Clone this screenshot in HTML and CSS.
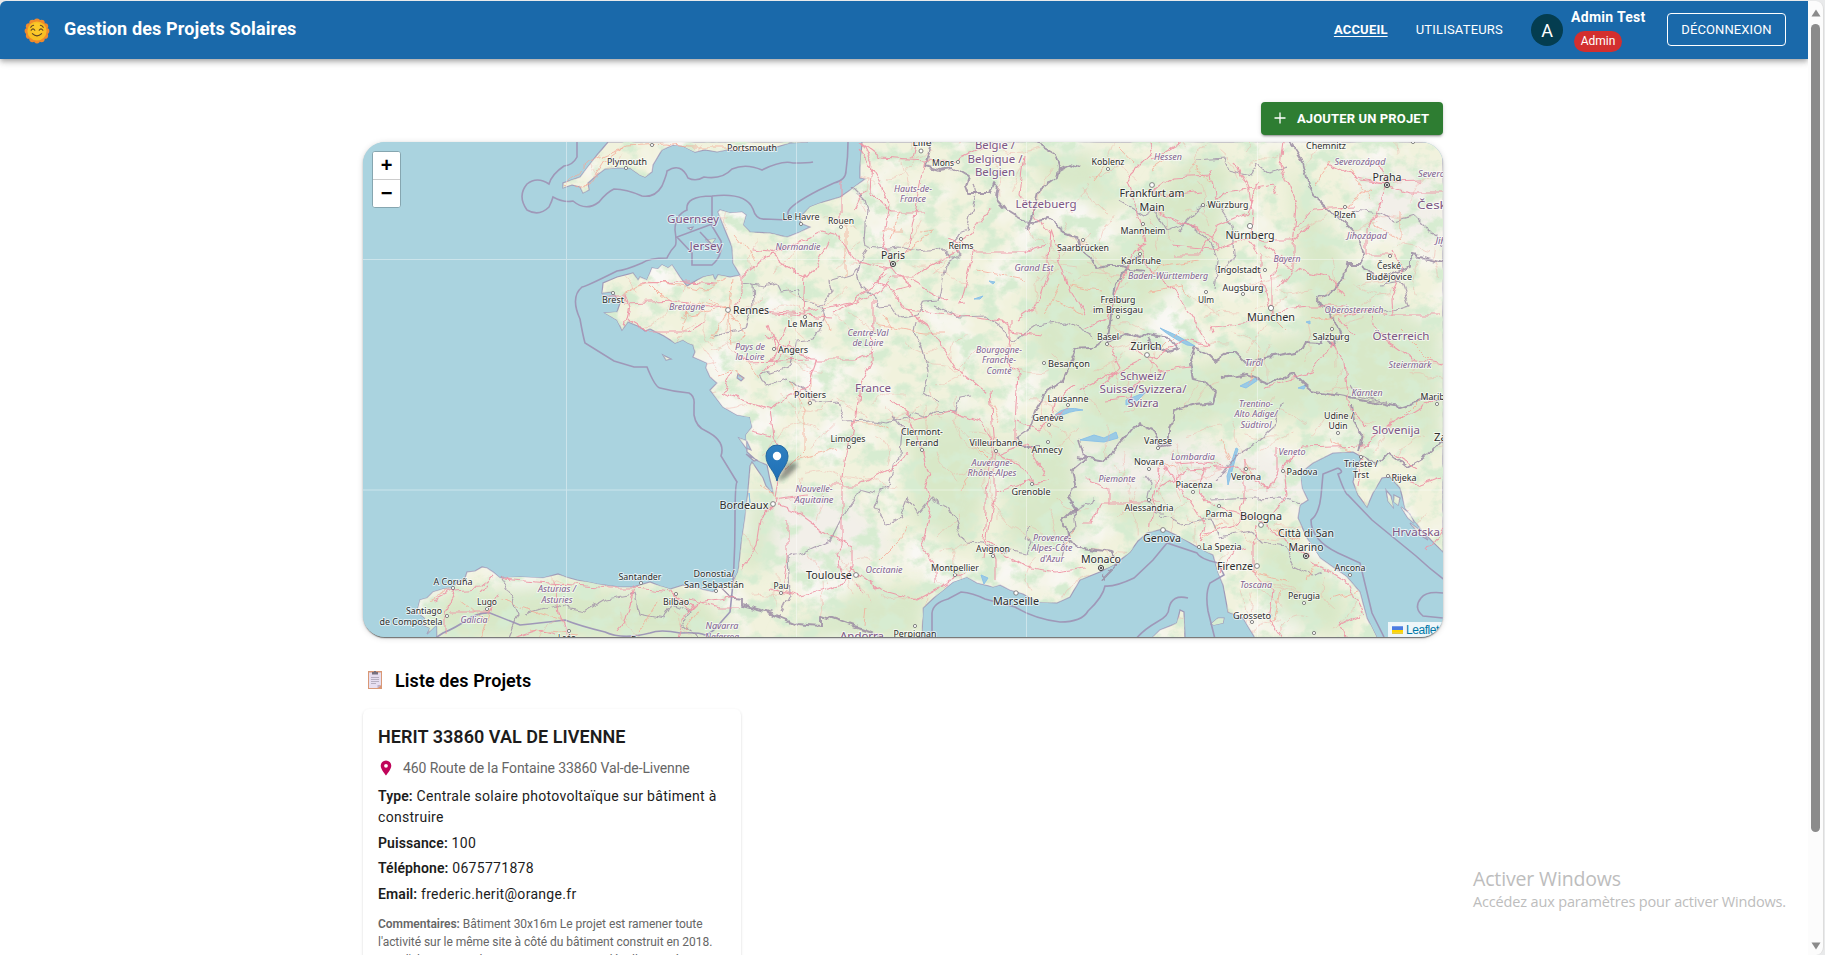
FILE: index.html
```html
<!DOCTYPE html>
<html lang="fr">
<head>
<meta charset="utf-8">
<title>Gestion des Projets Solaires</title>
<link rel="stylesheet" href="styles.css">
</head>
<body>
<div class="window">
  <div class="page">
    <header class="appbar">
      <svg class="sun" viewBox="0 0 26 26">
        <g id="rays"></g>
        <circle cx="13" cy="13" r="9.6" fill="#f8bf23"/>
        <circle cx="13" cy="11" r="6" fill="#ffd02e" opacity=".6"/>
        <path d="M7.2 12.2q1.8-2.6 3.6 0M15.2 12.2q1.8-2.6 3.6 0M8.4 15.6q4.6 4.6 9.2 0M6.8 9.3q1-1.6 2.8-2M16.4 7.3q1.8.4 2.8 2" fill="none" stroke="#5b4224" stroke-width="1.1" stroke-linecap="round"/>
      </svg>
      <h1 class="brand">Gestion des Projets Solaires</h1>
      <nav class="nav">
        <a class="nav-link active">ACCUEIL</a>
        <a class="nav-link">UTILISATEURS</a>
      </nav>
      <div class="user">
        <span class="avatar">A</span>
        <div class="identity">
          <span class="user-name">Admin Test</span>
          <span class="chip">Admin</span>
        </div>
      </div>
      <button class="logout">DÉCONNEXION</button>
    </header>
    <main class="content">
      <div class="actions">
        <button class="add"><svg viewBox="0 0 12 12"><path d="M6 .5v11M.5 6h11" stroke="#fff" stroke-width="1.3"/></svg><span>AJOUTER UN PROJET</span></button>
      </div>
      <section class="map">
        <svg class="tiles" viewBox="363 142 1080 496">
          <defs>
            <filter id="woods" x="0" y="0" width="100%" height="100%">
              <feTurbulence type="fractalNoise" baseFrequency=".05 .06" numOctaves="6" seed="8"/>
              <feColorMatrix values="0 0 0 0 .68  0 0 0 0 .84  0 0 0 0 .64  4.5 0 0 0 -2.1"/>
            </filter>
            <filter id="fields" x="0" y="0" width="100%" height="100%">
              <feTurbulence type="fractalNoise" baseFrequency=".02" numOctaves="4" seed="21"/>
              <feColorMatrix values="0 0 0 0 .95  0 0 0 0 .935  0 0 0 0 .905  0 3 0 0 -1.35"/>
            </filter>
            <filter id="wiggle" filterUnits="userSpaceOnUse" x="363" y="142" width="1080" height="496">
              <feTurbulence type="fractalNoise" baseFrequency=".07" numOctaves="3" seed="4"/>
              <feDisplacementMap in="SourceGraphic" scale="9" xChannelSelector="R" yChannelSelector="G"/>
            </filter>
            <filter id="soft" x="-20%" y="-20%" width="140%" height="140%"><feGaussianBlur stdDeviation="9"/></filter>
            <path id="coast" d="M862 142L861 155 860 167 860 178 865 179 853 188 840 197 823 202 810 207 802 215 800 223 810 227 800 232 787 237 770 233 750 232 743 225 746 215 742 212 730 213 720 210 718 212 725 230 732 247 733 263 740 275 730 277 718 275 715 280 713 275 703 277 697 280 687 286 680 277 672 265 668 268 662 265 658 269 652 268 650 273 647 280 640 277 638 280 633 273 617 277 603 283 602 293 613 292 620 303 617 312 605 313 617 320 622 330 628 322 640 327 645 331 650 329 658 333 664 336 675 343 683 340 688 343 693 345 695 352 693 357 700 360 707 363 706 368 710 377 717 383 710 390 723 407 737 415 750 417 752 427 746 435 747 452 756 460 767 465 770 480 774 495 766 486 763 478 752 462 750 466 748 490 745 518 741 545 738 572 733 582 717 588 713 592 697 588 683 585 670 589 660 586 650 582 633 587 620 587 597 584 577 580 566 577 558 574 543 578 520 577 500 578 493 572 487 568 482 567 475 571 467 572 465 578 457 583 453 588 443 589 433 592 427 598 420 600 417 612 425 618 423 625 430 628 427 634 437 624 437 638H922L923 608 937 595 953 582 967 577 977 583 993 587 1000 585 1010 590 1023 594 1037 602 1057 603 1070 597 1080 580 1100 572 1117 563 1130 552 1138 541 1147 533 1163 529 1180 537 1197 547 1213 555 1218 572 1223 585 1228 612 1243 618 1255 638H1377L1367 618 1360 592 1347 577 1320 558 1307 538 1298 518 1300 505 1308 500 1302 488 1300 473 1313 463 1333 453 1353 452 1362 457 1357 465 1353 482 1358 495 1367 507 1373 493 1382 478 1390 477 1400 488 1405 508 1423 532 1443 552V142Z
              M608 142L597 155 587 168 580 177 563 183 563 188 572 185 580 187 583 193 589 190 588 183 597 175 605 169 617 168 630 168 640 175 645 177 652 172 653 165 662 150 673 145 683 146 695 152 705 150 717 152 727 150 740 151 777 147 790 143 808 142Z
              M1152 638L1160 630 1177 623 1180 610 1184 612 1185 638ZM1211 624L1218 618 1224 618 1223 623 1214 625ZM738 374l6 4-3 3-4-3zM706 240l9-1-4 6zM688 228l5-1-2 3zM663 355l8 4-5 1zM739 438l8 3 4 9-5-2zM746 454l11 6-3 1zM1386 490l5 6 2 11-5-6zM1394 495l6 3-2 7-4-3zM1401 507l9 7 4 9-6-5zM1410 523l11 8 7 9-8-5z"/>
            <clipPath id="land"><use href="#coast"/></clipPath>
          </defs>
          <rect x="363" y="142" width="1080" height="496" fill="#aad3df"/>
          <use href="#coast" fill="#f1f2dd" stroke="#9f9ab8" stroke-width="1.2"/>
          <g clip-path="url(#land)">
            <rect x="363" y="142" width="1080" height="496" filter="url(#fields)"/>
            <g filter="url(#soft)">
              <path fill="#f2efe9" d="M1080 440q90-10 160 10l75 10-15 50-80-20-80 10-70-20zM740 500l100-10 60 60-110 30zM1350 170l93 0 0 80-60-20z"/>
              <g fill="#d3e6c3" opacity=".85">
                <path d="M755 478q25 20 12 90l-27 5zM910 420q60-30 90 30l-30 100-60-30zM1010 440l60-20 15 120-80 10zM860 590l70-5-10 53-140 0zM1165 180l30-30 40 20-20 90-60 40-40 50-10-80zM1290 160l50 90 40 50 63 30v120l-120-30-150-10-50-20 120-40 60-20zM1250 540l40 0 60 60-10 38-60-20zM1030 150l60 0 40 60-80-20zM430 595l120-10 150 10 40 45H440zM1100 500l60-5 30 20-60 20zM1030 250l80 0 20 80-60 60-40-40zM1080 360l100 0 50 60-100 30-50-10z"/>
              </g>
            </g>
            <rect x="363" y="142" width="1080" height="496" filter="url(#woods)"/>
          </g>
          <path fill="#9acbe5" stroke="#8cc2e8" stroke-width="1" d="M1160 328q18 7 35 18l-8-1q-18-9-27-17zM1055 415q10-10 28-5-15 1-24 7zM1227 476l9-28 2 1-6 22-4 14zM1240 386l16-8 2 2-12 8zM1080 440l14-5 10 3 12-6 2 6-14 4zM1126 400l20-8-8 8-12 5zM1298 388l8-3-2 4zM989 281l6 1-2 2zM974 299l9-3-3 3zM749 493l1 10zM981 575l7 3-4 6zM1306 322l4-1v3z"/>
          <g fill="none" stroke="#9f98b8" stroke-width="1.600" id="sea-borders">
            <path d="M577 142v15q-4 8-13 9-12 8-15 18-12-8-22 0-10 12 0 26 12 7 22-3 3-6 4-10 11 6 20 4 13 11 26 1 8-10 15-13 12 0 28 7 13 2 20-10 5-12 5-15 14-9 21 7 8 4 16-1 18 3 28-8 14-6 30 1 20-10 31-7 16 0 20-1M848 142q0 15-2 29 0 9-12 12l-15 7q-29 15-31 22v8l-23-1q-9 1-12-10-7-17-41-13-27 0-25 14-12 5-12 20 2 14 0 16-5 5-8 12-18 0-25 5-16 7-25 8-32 16-35 16-12 10-2 32 3 17 5 24l29 18 20 6h13q8 20 13 21 15 4 29 5 6 3 5 12v10q2 12 12 16 20 10 15 25l16 26q-2 2-2 40 0 50-5 90l-8 9q-9 12-17 14-6-3-25-2-20-4-30 0-28 7-45-1-25-6-40-12-25 3-45 5l-30-12q-12-1-25 8-8 6-22 12-27 17-28 35v18q7 12 9 16M712 196v30l9 15q2 15-9 24h-20v-12l-15-16 35-13M700 232l16 17"/>
            <path d="M932 638V613q1-10 16-14l13-7q12 1 24 7l30 8q20 12 45 15 22 0 28-11 15-14 17-25 10 1 29-8l19-18 14-17 30 10q3 6 21 10l6 12-14 8q-5 10-2 28l9 36M1188 598q-16-4-19 10 0 8-12 14-14 8-22 18M1338 468l-15 6-2 22q-2 18-10 24 0 20 27 33l22 10 12 50 12 24M1338 468q7 4 0 6 7 20 10 21l24 25 44 36q15 14 30 25M1443 593q-17-2-22 5-8 10 2 18l20 2"/>
          </g>
          <g clip-path="url(#land)"><g class="minor" id="minor" filter="url(#wiggle)"></g></g>
          <g filter="url(#wiggle)">
          <g fill="none" stroke="#a08fa8" stroke-width="1.2" opacity=".8" stroke-linejoin="round">
            <path d="M853 188l12 12 3 10-2 30 1 7 10 1 20-2 20 4 20-2 14 10 8 0M867 250l-8 12-2 12 3 10 14 14 3 8 14-1 9 13 18-3 6-14 14-1 7-33 14-12-8-12 8-9 8-3 3-14 6-22-3-12M740 283l13 1 10 2 15-3 4 8 15-2 7 14 16 4 11-14-2-12 24-7 5-8M753 284l1 22-8 22-32 8M822 307l4 10-12 22-17 2-6 25-30 10 5 9 20-8 22 16 8 10 22-2 6 20 28-1 16 2 20-5 4-5 16 5 8-6 20 2 4-15 12-2M915 320l-2 12 9 15 6 24-4 20 15 10M935 305l23 12 28-1 16 12 10 14 24-16 30-4 26 14M892 415l10 12-2 30-6 4-6 24-8 8-6 15 12 16 14-5 8-22 10 17 10-12 4-4 18 10 8 20 8 14 16 1 10 5 36 6 4-12-10-6 8-10M874 495l-14-4-20 30-10 20-22 10-20 6 2 38-8 17M500 578l12 20 6 15-10 24M525 614l30-9 30 6 20-12 30-5 4 20 25 5 8-15 18 8-8 14 14 12M1120 202l24 14 10-6 12 20 20-7 25 18M1195 160l30-2 5 12 20 5 7-12 12 10 18-5M1210 240l8 20-4 30M1180 230l22-24 18 2 12 18 2 30-12 15M1352 210l30 3 12 8 20-6 30 30M1382 285l20-3 8 22-30 8-12-5M1060 560l4-22 12-10-2-18 20-9M1145 475l6 8-4 20 8 10 10 0M1160 516l22 8 30-5 8 18 30-6 12 12 24 4 8 20 16 8 14-4M1210 500l70-3 20 7M1215 480l10-8 12-18 20-12 18-16 8-22M1352 385l6 10 30 8"/>
          </g>
          <g fill="none" stroke="#9b8ba3" stroke-width="1.900" opacity=".85" stroke-linejoin="round">
            <path d="M933 142l-8 24 14 4 14-2 15 9-3 9 3 8 22 0 4-12 4 5-2 12 7 8 13 8 15 8 16-4 18 13 12 4 3 12 12 10 4 10 12-2 14 0 8 3 15 2M1035 142l20 12 4 14-2 10-17 12-8 28-5 11M1059 170l12-6 8 3M1140 256l-12 10-12 18-5 30-3 25-17 8-15 1-5 12-10 22-14 10-12 20-6 18-12 8 5 10 18 0M1107 342l20-8 13 5 8-6 20 4 10 12-10 3-14-5-6-10M1195 347l-6 16 3 15 14 3 10 12-3 10-18 2-20 6-6 18 0 16-9 2-6-16-16-8-20 25-14 13-28-5M1195 347l12 6 8 8 12-8 8 0 12 12 20-8 34-6 4-8 14 1 4-7 10 8 8-12-6-16-14-12-4-8 14-6 14-16 2-10 12 0 6-12-4-12-30-30-18-16-5-9-6-25-14-22 3-11 8 10 10-16 20 2 24-18 30 2M1363 267l18 12 30-13v-12l32 8M1222 378l26-4 20 8 24-8 18 16 40 7 50 10 24-8 19 0M1352 405l2 17 8 12-4 18M1362 457l14 8 12-12 18 14 24-14 13-12M1080 440l6 18-14 12 4 16-8 10 8 12-12 12 4 20 14 8 30 4 5 12-16 16M1103 572l2 8M722 588l8 8 12 2 0 8 24 6 30 12 26 2v-10l18 6 40 14"/>
          </g>
          <g fill="none" stroke="#f7a593" stroke-width=".9" opacity=".8">
            <path d="M563 185l30-25 30-12M575 187l15-2 15-25 20-14 40-2 25 3 60 0M613 300l25-15 12-3 30 3 25 5 20-10M650 285l10 10 30 20M690 300l-8 30M690 315l40-8M728 310l-28-8-20 16M728 310l-20-10M728 310l4-30M728 310l4 34M728 310l-16 28M728 310l16 22-6 14M735 235l20 25M720 375l15-5 10 8M760 380l-20-25M845 225v50M890 240l10-30M882 230l20 0M905 252l28-20M920 232l15-2M975 270l50 10M1060 285l-15 30M1055 300l28 15M892 330l-12-18M875 325l50 8 20 0M810 375v30M853 423l25 0 12 5M805 450v-40l-15-30M805 450l-20 20M795 460l40-10M780 500l-20-15M880 560l20-20 10-16M865 605l-2 20M970 440l20 20M990 400l10 20M960 490l12-20M1060 550l14-20M830 330l-6-15M1110 160l-15 20M1135 165l-15-16M1190 165l20 15M1165 160l-15 10M1135 280l30-15 35-5M1150 290l30-5 12 15M1100 290l-30-5M1180 330l-20 20M1260 350l-10 35M1275 320l10 10M1310 320l30-6 30-4M1370 220l30 20M1370 200l-20-30M1400 210v30M1340 210l30-20M1330 160l-15 25M1175 470l-14-10M1200 540l24-18M1250 570l40 10M1280 590l-8 36M1330 600l30-10M1320 560l-15 20M1300 540l-25-10M1230 460l-10-20M1255 480l-12-20M1330 440l20 10M1400 330l30 30M1420 400l-20 20M430 600l20-10M480 640l10-30M530 630l50 5M660 600l-20 30M500 600l60 20M700 610l-15 20M460 600l25 20"/>
          </g>
          <g fill="none" stroke="#ee93a5" stroke-width="1.1" opacity=".9" stroke-linejoin="round">
            <path d="M603 295l22 0 5 12-5 20M625 303l50-2 45 8M640 283l50-1 25 2M628 320l20 12 40 0 20-12M742 275v20l-10 12M742 275q30-25 50-30l30-14 15 4 18 25 37 10M760 310l45 3 45-10 37-28M762 312l70 5M832 312l50-22 10-12M806 275l-2 40M830 240l-20 38-14-4-25-22-20-2M841 180v40M855 210l10-20M862 142l10 20-2 30 20 20 35 0M893 270l-10-30 6-35-10-25-18-30M893 270l15-25 12-55 5-30M925 160l-45-3-20-15M925 160l28 2 30-14 20 0M912 158l5-28M990 210l-20 25-12 8-12-5M893 278l20 0 16-12 32-15M892 268l8 10 10 8-16 4-14-8 4-12zM893 290l12 20 25 18 30 45 25 20M905 310l35 3 60 8 12 10 30 4M910 280l36 20M960 240l15 12 50 0 20-7M973 252l-4 20-8 30 6-1M1010 320l0 15-2 28 10 10-3 50 0 20M1050 230l-3 45-10 30-22 15M1050 235l-15-20-15-20 5-40M1050 230l20 60 15 25M873 300v20l-1 40-12 25-4 30-10 40-4 30 0 60-6 10 8 25M765 335l45 25 45 0 20-8M808 360l-60 2-15-12M778 355l-10-30M771 362l15-35M760 378l18-20 12-15M733 372l-10 20M770 410l12-10 25-12 10-30M770 410l-50-18M770 410l4 25 10 20M752 430l20 5M775 505l5-30M778 505l18 6 28 20 28 15 0 20-12 20-40 10-30-8M850 568l30 22 36 10 24-13 25-15M856 584l8 10M775 505l-15 15-4 25-15 25M788 520l0 30-5 40M776 500l30-5M830 485h28l30-15 20-15M890 400l25 20 35-8 30 10 12 20-6 50 0 20-2 28 12 20v20M908 418l15 35 6 22-4 12 6 20-10 40 16 20v16M990 390l4 60 0 50-6 30-4 28M994 452l26 12 15 20 14-4M998 455l30-10 18 30M1018 420l20 10 12-10 18-12M1034 480l-40 12M988 540l18 15 20 12 30 5 30-4M1050 420l5-20 20-15M1080 390l30-15 30-14M1083 330l24-12 16-40 12-26 10-10M1145 240l-18-60 25-25-12-50M1152 190l20 6 30-4M1152 210l60 25 6 15M1152 192l20-15 40-2M1175 255l24 0 20-30 28-12 10-30M1152 160l30-18M1210 170l6 30 8-8 24-3 25-5M1273 184l5 10M1235 160l14 30 3 20-2 26 15 4 30 0 15-14M1250 240l10 14 0 20 12 40M1252 236l-40 14-40-4M1272 316l-20 6-40 4 2 8M1272 316l0-40 10-20M1265 245l24 22 40 10 16 20M1278 290l15-20 0-25 4-40-16-40 3-23M1278 310l30-4 38 0M1293 230l20-22 40-2M1360 180l27 3 36-1M1387 183l-8-24M1387 183l-30-6-30-14M1387 183l-10 30-10 16 0 25 26 0M1387 185l20 8 36 0M1393 250l10 20-13 28 1 18M1340 316l14 20M1345 316l24-6 20 5 50 0M1373 315l4 20 16 10 20 14 30 6M1332 342l-20 30-50 16M1332 342l12 22 6 44 18 18M1208 345l-26-6-25 20-28-12M1208 345l-30-50-30-30-10-20M1147 355l12 16 30-4M1108 344l12 22-18 20M1105 400l24-2 12-20M1165 460l-7 10-8 60M1158 490l30-20 48-3M1160 502l-60 0-8 20-10 0M1110 502l0-14-20-6-6-6M1165 465l20 30 20 30-4 15M1175 465l30-2 40 6 10 0M1205 467l-8 25 16 14 45 14 30 22 20 14M1244 460v40l-5 20M1256 525l-3 20 0 25 20 22-4 28 12 18M1240 470l28 20 10-20 0-22M1271 515l16-20-4-30 20-18 60-2M1205 533l30-8 10-10M1222 572l12-22 12-4M1310 560l40 24 14 30M1360 615l-20 10 4 13M1362 448l30-25 20-10 25-15M1362 458l-4 28M1390 475l30 10 20-8M1427 550l16-22M1395 455l22 14M435 600l20-10 25-2 14-12M455 590l-10 24 0 22M450 612l40 0 8-20M480 595l10-10M500 579l110 9 25 0 35 4 22 14-10 14-8 30M635 588l-10 34-8 10M555 580l3 34 10 24M513 638l25-8 18 5M670 590l18 22 10-10 40-6M690 600l30 8 18 0"/>
          </g>
          </g>
          <path d="M363 259.500h1080M363 490h1080M566.500 142v496M796.500 142v496M1026.500 142v496M1257.500 142v496" stroke="#fff" opacity=".4" stroke-width="1"/>
          <g id="labels"></g>
        </svg>
        <div class="zoom"><button>+</button><button>−</button></div>
        <svg class="pin" viewBox="0 0 46 42">
          <defs>
            <linearGradient id="pinfill" x2="0" y2="1"><stop stop-color="#2f80c0"/><stop offset="1" stop-color="#1d6fb6"/></linearGradient>
            <filter id="blur"><feGaussianBlur stdDeviation="2.200"/></filter>
          </defs>
          <path d="M13 39L22 22q8-4 12-1-4 11-21 18z" fill="#333" opacity=".5" filter="url(#blur)"/>
          <path d="M13 38C11 28 2 23 2 13a11 11 0 0 1 22 0C24 23 15 28 13 38z" fill="url(#pinfill)" stroke="#2467a0"/>
          <circle cx="13" cy="13" r="4.200" fill="#fff"/>
        </svg>
        <div class="credit"><svg viewBox="0 0 12 8"><path fill="#4c7be1" d="M0 0h12v4H0z"/><path fill="#ffd500" d="M0 4h12v3H0z"/><path fill="#e0bc00" d="M0 7h12v1H0z"/></svg>Leaflet</div>
      </section>
      <h2 class="list-title">
        <svg viewBox="0 0 14 18"><path fill="#d99876" d="M0 0h14v18H0z"/><path fill="#e7dff0" d="M1 1.500h12v12.500l-3.500 3H1z"/><path fill="#bdb0cb" d="M13 14H9.500v3z"/><path fill="#77717e" d="M4 1h6v2.600H4zM6 0h2v2H6z"/><path stroke="#a9a2b5" stroke-width=".8" d="M3 6.500h8M3 8.500h8M3 10.500h8M3 12.500h5"/></svg>
        Liste des Projets
      </h2>
      <article class="card">
        <h3>HERIT 33860 VAL DE LIVENNE</h3>
        <p class="address"><svg viewBox="0 0 12 16"><path fill="#c0055a" fill-rule="evenodd" d="M6 .5A5.300 5.300 0 0 0 .7 5.800C.7 9.500 6 15.500 6 15.500s5.300-6 5.300-9.700A5.300 5.300 0 0 0 6 .5zm0 7.200a1.900 1.900 0 1 1 0-3.800 1.900 1.900 0 0 1 0 3.800z"/></svg>460 Route de la Fontaine 33860 Val-de-Livenne</p>
        <p class="row"><b>Type:</b> Centrale solaire photovoltaïque sur bâtiment à construire</p>
        <p class="row"><b>Puissance:</b> 100</p>
        <p class="row"><b>Téléphone:</b> 0675771878</p>
        <p class="row"><b>Email:</b> frederic.herit@orange.fr</p>
        <p class="comment"><b>Commentaires:</b> Bâtiment 30x16m Le projet est ramener toute<br>l'activité sur le même site à côté du bâtiment construit en 2018.<br>Pour l'alimentation le nouveau jeune qui se détaille avec à</p>
      </article>
    </main>
  </div>
  <div class="scrollbar">
    <svg viewBox="0 0 10 8"><path d="M5 0.500L9.500 7.500H.5z" fill="#8b8b8b"/></svg>
    <div class="thumb"></div>
    <svg class="down" viewBox="0 0 10 8"><path d="M5 7.500L.5.500h9z" fill="#8b8b8b"/></svg>
  </div>
  <aside class="watermark"><p class="wm-title">Activer Windows</p><p class="wm-text">Accédez aux paramètres pour activer Windows.</p></aside>
</div>
<script src="map.js"></script>
</body>
</html>
```
FILE: styles.css
```css
* { box-sizing: border-box; margin: 0; }
body { font-family: Roboto, sans-serif; background: #e9eaeb; overflow: hidden; }
button { font: inherit; border: 0; padding: 0; }
.window { position: relative; display: flex; height: 955px; padding-top: 1px; overflow: hidden; }
.page { width: 1808px; background: #fff; border-top-left-radius: 6px; overflow: hidden; }
.appbar { display: flex; align-items: center; height: 58px; padding: 0 22px 0 24px; background: #1a69aa; color: #fff;
  box-shadow: 0 2px 4px -1px rgba(0,0,0,.2), 0 4px 5px rgba(0,0,0,.14), 0 1px 10px rgba(0,0,0,.12); }
.sun { width: 26px; height: 26px; margin: 2px 14px 0 0; }
.brand { flex: 1; font-size: 18px; font-weight: 700; line-height: 26px; padding-bottom: 3px; letter-spacing: .14px; }
.nav { display: flex; gap: 28px; font-size: 13px; letter-spacing: .2px; padding-bottom: 2px; }
.active { font-weight: 700; text-decoration: underline; text-underline-offset: 2px; }
.user { display: flex; align-items: center; margin-left: 28px; gap: 8px; }
.avatar { width: 32px; height: 32px; border-radius: 50%; background: #043d50; text-align: center; font-size: 18px; line-height: 33px; }
.identity { width: 75px; padding-top: 5px; }
.user-name { display: block; font-size: 14px; font-weight: 700; line-height: 20px; margin-bottom: 4px; letter-spacing: .3px; white-space: nowrap; }
.chip { display: block; width: 48px; height: 21px; margin: 0 0 6px 3px; border-radius: 11px; background: #d32f2f; font-size: 12px; line-height: 20px; text-align: center; }
.logout { width: 119px; height: 33px; margin: 0 0 2px 21px; border: 1px solid #fff; border-radius: 4px; background: none; color: #fff; font-size: 13px; letter-spacing: .1px; }
.content { width: 1080px; margin: 0 auto 0 363px; }
.actions { display: flex; justify-content: flex-end; padding: 43px 0 7px; }
.add { display: flex; align-items: center; width: 182px; height: 33px; padding: 0 0 1px 13px; gap: 11px; border-radius: 4px; background: #2e7d32; color: #fff; font-size: 13px; font-weight: 700; letter-spacing: .13px; white-space: nowrap;
  box-shadow: 0 3px 1px -2px rgba(0,0,0,.2), 0 2px 2px rgba(0,0,0,.14), 0 1px 5px rgba(0,0,0,.12); }
.add svg { width: 12px; height: 12px; }
.map { position: relative; height: 495px; overflow: hidden; border-radius: 22px; background: #aad3df;
  box-shadow: 0 2px 1px -1px rgba(0,0,0,.4), 0 1px 2px rgba(0,0,0,.25), 0 1px 6px rgba(0,0,0,.15); }
.tiles { display: block; width: 1080px; height: 496px; font-family: "Noto Sans", sans-serif; }
.tiles text { text-anchor: middle; fill: #2e2e2e; stroke: rgba(255,255,255,.65); stroke-width: 2px; paint-order: stroke; stroke-linejoin: round; }
.tiles .region { font-style: italic; fill: #80618f; }
.tiles .country { fill: #7d5685; }
.minor { fill: none; stroke: #f2aaa4; stroke-width: .7; opacity: .6; }
.zoom { position: absolute; left: 9px; top: 9px; width: 29px; height: 57px; border: 1px solid #86a6b0; border-radius: 3px; background: #fff; overflow: hidden; }
.zoom button { display: block; width: 27px; height: 27px; background: #fff; font: 700 20px/27px "Liberation Sans", sans-serif; }
.zoom button + button { border-top: 1px solid #ccc; height: 28px; }
.pin { position: absolute; left: 401px; top: 301px; width: 46px; height: 42px; }
.credit { position: absolute; right: 0; bottom: 0; display: flex; align-items: center; width: 55px; height: 15px; padding-left: 4px; gap: 3px; background: rgba(255,255,255,.8); color: #0078a8; font: 12px "Liberation Sans", sans-serif; letter-spacing: -.45px; }
.credit svg { width: 11px; height: 8px; flex: none; }
.list-title { display: flex; align-items: center; height: 26px; margin: 30px 0 16px 5px; gap: 13px; font-size: 18px; font-weight: 600; letter-spacing: .08px; }
.list-title svg { width: 14px; height: 18px; }
.card { width: 378px; height: 400px; padding: 15px; border-radius: 6px; color: #1c1c1c; box-shadow: 0 2px 1px -1px rgba(0,0,0,.2), 0 1px 1px rgba(0,0,0,.14), 0 1px 3px rgba(0,0,0,.12); }
.card h3 { font-size: 18px; font-weight: 600; line-height: 26px; margin-bottom: 6px; letter-spacing: .05px; }
.address { display: flex; align-items: center; height: 24px; padding-left: 2px; margin-bottom: 6px; gap: 11px; font-size: 14px; letter-spacing: -.1px; color: #666; white-space: nowrap; }
.address svg { width: 12px; height: 16px; }
.row { font-size: 14px; line-height: 21px; margin-bottom: 4px; letter-spacing: .3px; }
.row + .row { margin-top: 4.500px; }
.row b, .comment b { font-weight: 600; letter-spacing: .1px; }
.comment { margin-top: 10px; font-size: 12px; line-height: 18px; color: #666; white-space: nowrap; letter-spacing: -.04px; }
.comment b { letter-spacing: -.04px; }
.scrollbar { width: 16px; background: #fcfcfc; border-top-right-radius: 8px; border-bottom-right-radius: 8px; display: flex; flex-direction: column; padding: 8px 0 5px 3px; border-right: 1px solid #ddd; }
.scrollbar svg { width: 10px; height: 8px; }
.thumb { width: 9px; height: 808px; margin-top: 7px; border-radius: 5px; background: #8b8b8b; }
.scrollbar .down { margin-top: auto; }
.watermark { position: absolute; left: 1473px; top: 865px; color: #bdbdbd; font-family: "Open Sans", sans-serif; white-space: nowrap; }
.wm-title { font-size: 19.500px; line-height: 28px; letter-spacing: -.15px; }
.wm-text { font-size: 14.500px; line-height: 18px; letter-spacing: -.16px; }
```
FILE: map.js
```js
const NS = 'http://www.w3.org/2000/svg';
function add(parent, tag, attrs, text) {
  const el = document.createElementNS(NS, tag);
  for (const k in attrs) el.setAttribute(k, attrs[k]);
  if (text) el.textContent = text;
  parent.appendChild(el);
}

const rays = document.getElementById('rays');
for (let i = 0; i < 12; i++) {
  const a = i * Math.PI / 6;
  add(rays, 'circle', { cx: 13 + 9.3 * Math.cos(a), cy: 13 + 9.3 * Math.sin(a), r: 3.1, fill: '#f08a2c' });
}

// Secondary roads: short meandering lines from a fixed seed.
let seed = 7;
const rnd = () => (seed = (seed * 16807) % 2147483647) / 2147483647;
let d = '';
for (let i = 0; i < 330; i++) {
  let a = rnd() * 6.28;
  d += `M${(400 + rnd() * 1040).toFixed(1)} ${(142 + rnd() * 495).toFixed(1)}`;
  for (let k = 0; k < 4; k++) {
    a += (rnd() - .5) * 1.1;
    d += `l${(9 * Math.cos(a)).toFixed(1)} ${(9 * Math.sin(a)).toFixed(1)}`;
  }
}
add(document.getElementById('minor'), 'path', { d });

// kind, text, centre x, baseline y, width
const labels = [
  ['c', 'Plymouth', 627, 165, 40], ['c', 'Portsmouth', 752, 151, 50], ['n', 'Guernsey', 693, 223, 52], ['n', 'Jersey', 706, 250, 33],
  ['c', 'Brest', 613, 303, 22], ['r', 'Bretagne', 687, 310, 36], ['c', 'Le Havre', 801, 220, 37], ['c', 'Rouen', 841, 224, 26],
  ['r', 'Normandie', 798, 250, 45], ['r', 'Hauts-de-', 913, 192, 38], ['r', 'France', 913, 202, 26], ['c', 'Lille', 922, 146, 19],
  ['c', 'Mons', 943, 166, 22], ['n', 'België /', 995, 149, 40], ['n', 'Belgique /', 995, 163, 55], ['n', 'Belgien', 995, 176, 40],
  ['n', 'Lëtzebuerg', 1046, 208, 61], ['b', 'Paris', 893, 259, 24], ['c', 'Reims', 961, 249, 25], ['r', 'Grand Est', 1034, 271, 39],
  ['b', 'Rennes', 751, 314, 36], ['c', 'Le Mans', 805, 327, 35], ['r', 'Centre-Val', 868, 336, 41], ['r', 'de Loire', 868, 346, 31],
  ['c', 'Angers', 793, 353, 30], ['r', 'Pays de', 750, 350, 30], ['r', 'la Loire', 750, 360, 29], ['r', 'Bourgogne-', 999, 353, 46],
  ['r', 'Franche-', 999, 363, 34], ['r', 'Comté', 999, 374, 25], ['c', 'Besançon', 1069, 367, 42], ['n', 'France', 873, 392, 36],
  ['c', 'Koblenz', 1108, 165, 33], ['r', 'Hessen', 1168, 160, 28], ['b', 'Frankfurt am', 1152, 197, 65], ['b', 'Main', 1152, 211, 25],
  ['c', 'Würzburg', 1228, 208, 41], ['c', 'Mannheim', 1143, 234, 45], ['b', 'Nürnberg', 1250, 239, 49], ['c', 'Saarbrücken', 1083, 251, 52],
  ['c', 'Karlsruhe', 1141, 264, 40], ['r', 'Bayern', 1287, 262, 27], ['r', 'Baden-Württemberg', 1168, 279, 80], ['c', 'Ingolstadt', 1239, 273, 43],
  ['c', 'Augsburg', 1243, 291, 41], ['c', 'Ulm', 1206, 303, 16], ['c', 'Freiburg', 1118, 303, 35], ['c', 'im Breisgau', 1118, 313, 50],
  ['b', 'München', 1271, 321, 48], ['c', 'Basel', 1108, 340, 22], ['b', 'Zürich', 1146, 350, 31], ['c', 'Chemnitz', 1326, 149, 40],
  ['r', 'Severozápad', 1360, 165, 51], ['b', 'Praha', 1387, 181, 29], ['r', 'Severovýchod', 1446, 177, 56], ['c', 'Plzeň', 1345, 218, 22],
  ['n', 'Česko', 1436, 209, 38], ['r', 'Jihozápad', 1367, 239, 40], ['r', 'Jihovýchod', 1458, 244, 45], ['c', 'České', 1389, 269, 24],
  ['c', 'Budějovice', 1389, 280, 46], ['r', 'Oberösterreich', 1354, 313, 59], ['c', 'Salzburg', 1331, 340, 37], ['n', 'Österreich', 1401, 340, 57],
  ['r', 'Tirol', 1254, 366, 18], ['r', 'Steiermark', 1410, 368, 43], ['n', 'Schweiz/', 1143, 380, 46], ['n', 'Suisse/Svizzera/', 1143, 393, 87],
  ['n', 'Svizra', 1143, 407, 31], ['r', 'Trentino-', 1256, 407, 34], ['r', 'Alto Adige/', 1256, 417, 43], ['r', 'Südtirol', 1256, 428, 31],
  ['r', 'Kärnten', 1367, 396, 31], ['c', 'Maribor', 1437, 400, 33], ['c', 'Udine /', 1339, 419, 30], ['c', 'Udin', 1338, 429, 19],
  ['n', 'Slovenija', 1396, 434, 48], ['b', 'Zagreb', 1453, 441, 38], ['c', 'Varese', 1158, 444, 28], ['r', 'Veneto', 1292, 455, 27],
  ['r', 'Lombardia', 1193, 460, 44], ['c', 'Novara', 1149, 465, 30], ['c', 'Verona', 1246, 480, 30], ['c', 'Padova', 1302, 475, 31],
  ['c', 'Trieste /', 1361, 467, 34], ['c', 'Trst', 1361, 478, 16], ['c', 'Rijeka', 1404, 481, 25], ['r', 'Piemonte', 1117, 482, 37],
  ['c', 'Piacenza', 1194, 488, 37], ['c', 'Alessandria', 1149, 511, 49], ['c', 'Parma', 1219, 517, 27], ['b', 'Bologna', 1261, 520, 42],
  ['n', 'Hrvatska', 1416, 536, 48], ['b', 'Città di San', 1306, 537, 56], ['b', 'Marino', 1306, 551, 35], ['b', 'Genova', 1162, 542, 38],
  ['c', 'La Spezia', 1222, 550, 39], ['b', 'Monaco', 1101, 563, 40], ['b', 'Firenze', 1235, 570, 36], ['c', 'Ancona', 1350, 571, 31],
  ['r', 'Toscana', 1256, 588, 32], ['c', 'Perugia', 1304, 599, 32], ['c', 'Grosseto', 1252, 619, 38], ['c', 'Poitiers', 810, 398, 32],
  ['c', 'Limoges', 848, 442, 35], ['c', 'Clermont-', 922, 435, 42], ['c', 'Ferrand', 922, 446, 33], ['c', 'Villeurbanne', 996, 446, 53],
  ['r', 'Auvergne-', 992, 466, 41], ['r', 'Rhône-Alpes', 992, 476, 49], ['c', 'Annecy', 1047, 453, 31], ['c', 'Genève', 1048, 421, 31],
  ['c', 'Lausanne', 1068, 402, 41], ['c', 'Grenoble', 1031, 495, 39], ['r', 'Nouvelle-', 814, 492, 37], ['r', 'Aquitaine', 814, 503, 39],
  ['b', 'Bordeaux', 744, 509, 49], ['b', 'Toulouse', 829, 579, 46], ['r', 'Occitanie', 884, 573, 37], ['c', 'Montpellier', 955, 571, 48],
  ['c', 'Avignon', 993, 552, 34], ['r', 'Provence-', 1052, 541, 38], ['r', 'Alpes-Côte', 1052, 551, 41], ['r', "d'Azur", 1052, 562, 24],
  ['b', 'Marseille', 1016, 605, 46], ['c', 'Pau', 781, 589, 15], ['c', 'Perpignan', 915, 637, 43], ['n', 'Andorra', 862, 640, 44],
  ['c', 'Donostia/', 714, 577, 41], ['c', 'San Sebastián', 714, 588, 60], ['c', 'Santander', 640, 580, 43], ['c', 'Bilbao', 676, 605, 26],
  ['r', 'Asturias /', 557, 592, 38], ['r', 'Asturies', 557, 603, 31], ['c', 'A Coruña', 453, 585, 39], ['c', 'Lugo', 487, 605, 20],
  ['r', 'Galicia', 474, 623, 27], ['c', 'Santiago', 424, 614, 36], ['c', 'de Compostela', 411, 625, 63], ['r', 'Navarra', 722, 629, 33],
  ['r', 'Nafarroa', 722, 640, 34], ['c', 'León', 567, 641, 18], ['c', 'Burgos', 646, 643, 30]
];
const style = { c: ['city', 9.6], b: ['city', 11.3], r: ['region', 9.6], n: ['country', 11.3] };
const layer = document.getElementById('labels');

const towns = [[652,145],[626,168],[613,293],[801,224],[841,227],[921,151,2],[958,162],[961,239],[728,310,2.4],[805,317],[774,349],
  [1044,363],[1108,169],[1152,185,2.4],[1203,205],[1143,224],[1250,226,2.6],[1083,240],[1140,254],[1265,270],[1243,294],[1206,292],
  [1118,317],[1271,308,2.6],[1107,344],[1147,355,2.4],[1345,207],[1390,256],[1332,329],[1413,142],[1158,448],[1149,469],[1246,469],
  [1283,471],[1361,457],[1388,476],[1193,492],[1149,500],[1219,506],[1261,525,2.4],[1163,530,2.4],[1199,547],[1257,566,2.4],
  [1350,575],[1304,603],[1252,622],[1314,633],[810,403],[849,447],[922,450],[996,451],[1048,442],[1049,425],[1068,405],[1032,484],
  [773,504,2.4],[856,575,2.4],[955,575],[993,556],[1016,593,2.2],[781,593],[915,626],[716,591],[641,583],[676,594],[453,588],
  [487,609],[447,616],[569,631],[1338,433],[1437,404]];
towns.forEach(t => add(layer, 'circle', { cx: t[0], cy: t[1], r: t[2] || 1.6, fill: '#fff', stroke: '#777', 'stroke-width': .9 }));
[[893, 264], [1387, 185], [1306, 556], [1101, 568]].forEach(([x, y]) => {
  add(layer, 'circle', { cx: x, cy: y, r: 2.6, fill: '#ddd', stroke: '#444', 'stroke-width': 1 });
  add(layer, 'circle', { cx: x, cy: y, r: 1, fill: '#333' });
});
labels.forEach(([kind, text, x, y, w]) => {
  add(layer, 'text', { class: style[kind][0], x, y: y + .4, 'font-size': style[kind][1], textLength: w, lengthAdjust: 'spacingAndGlyphs' }, text);
});
```
